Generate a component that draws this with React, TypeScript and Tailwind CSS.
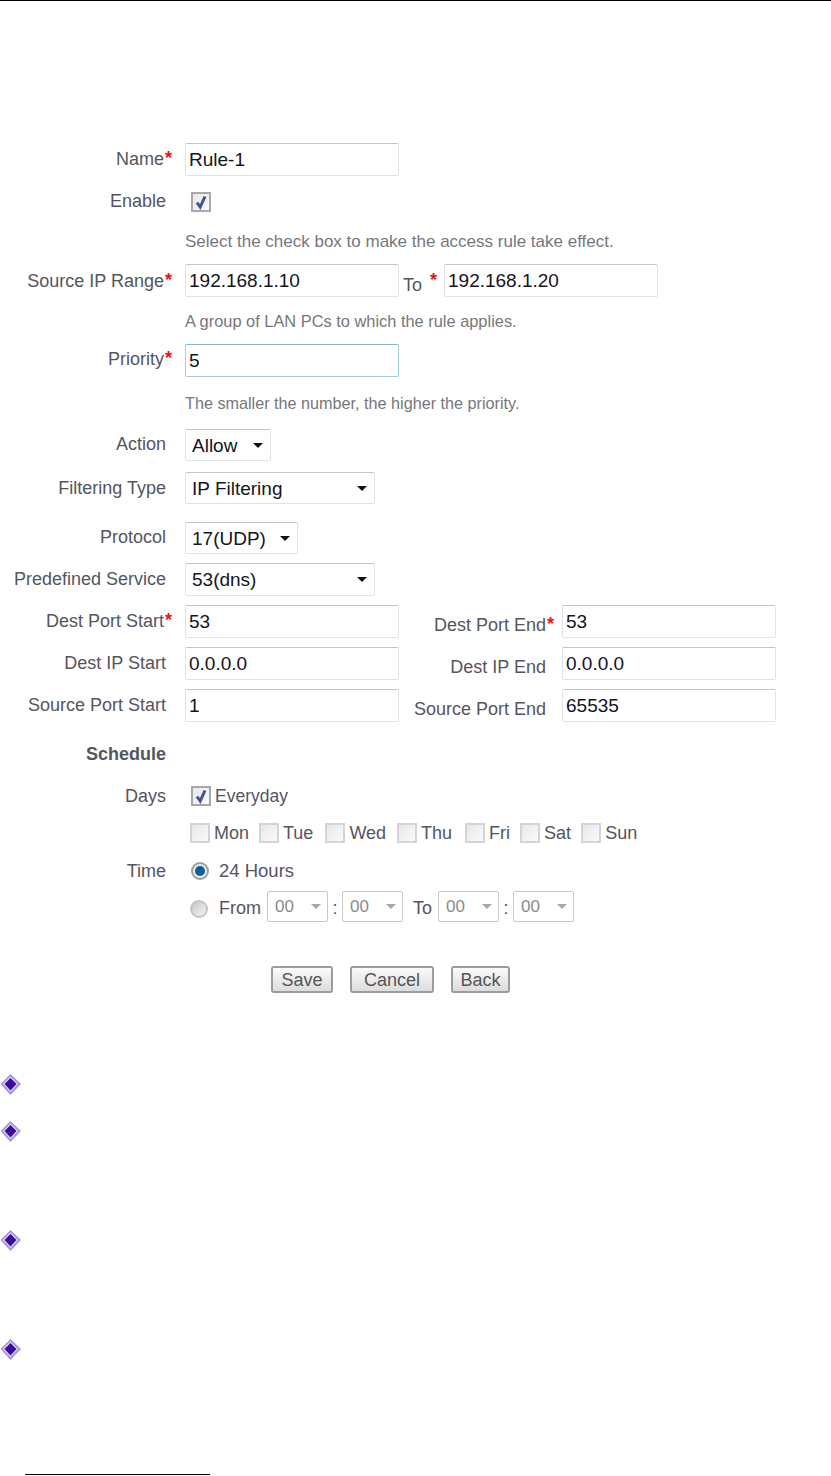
import { ReactNode } from "react";

const Star = () => <span className="font-bold text-[#f01010]">*</span>;

const Label = ({ text, required }: { text: string; required?: boolean }) => (
  <div className="w-[166px] shrink-0 text-right text-[18px] leading-[20px] text-[#555560] whitespace-nowrap relative">
    <span className={required ? "relative -left-[2px]" : ""}>{text}</span>
    {required && <span className="absolute left-full -top-[1px] -ml-[1px]"><Star /></span>}
  </div>
);

const TextBox = ({ value, focused, width = "w-[214px]" }: { value: string; focused?: boolean; width?: string }) => (
  <input
    readOnly
    defaultValue={value}
    className={`${width} h-[33px] shrink-0 rounded-[2px] border px-[3px] text-[19px] text-[#14141e] outline-none ${
      focused
        ? "border-[#a8cbe4] border-t-[#88b4d4]"
        : "border-[#dfe3e8] border-t-[#c2c4c8]"
    }`}
  />
);

const Select = ({ value, width, height = "h-[33px]" }: { value: string; width: string; height?: string }) => (
  <div className={`${width} ${height} flex items-center justify-between rounded-[2px] border border-[#dfe3e8] border-t-[#c2c4c8] pl-[6px] pr-[7px] text-[19px] text-[#14141e]`}>
    <span className="pt-[2px]">{value}</span>
    <span className="h-0 w-0 border-x-[5px] border-t-[5px] border-x-transparent border-t-[#111]" />
  </div>
);

const TimeSelect = () => (
  <div className="flex h-[31px] w-[61px] items-center justify-between rounded-[2px] border border-[#c8c8c8] pl-[7px] pr-[6px] text-[17px] text-[#8a8a8a]">
    <span>00</span>
    <span className="h-0 w-0 border-x-[5px] border-t-[5px] border-x-transparent border-t-[#a8a8a8]" />
  </div>
);

const CheckBox = ({ checked }: { checked?: boolean }) => (
  <div
    className={`flex h-[20px] w-[20px] shrink-0 items-center justify-center border-2 bg-gradient-to-br from-[#e8e8ec] to-[#fafafa] ${
      checked ? "border-[#a8a8ac]" : "border-[#d4d4d4]"
    }`}
  >
    {checked && (
      <svg width="14" height="16" viewBox="0 0 14 16">
        <path d="M3 8.5 L6.2 13 L11 2.5" fill="none" stroke="#41528f" strokeWidth="3" />
      </svg>
    )}
  </div>
);

const Radio = ({ checked, className = "" }: { checked?: boolean; className?: string }) => (
  <div
    className={`flex h-[18px] w-[18px] shrink-0 items-center justify-center rounded-full border-2 ${className} ${
      checked ? "border-[#a0a0a0] bg-[#e8e8e8]" : "border-[#c4c4c4] bg-gradient-to-br from-[#c8c8c8] to-[#f4f4f4]"
    }`}
  >
    {checked && <div className="h-[10px] w-[10px] rounded-full bg-[#0f5f97]" />}
  </div>
);

const Hint = ({ children, className }: { children: ReactNode; className: string }) => (
  <div className={`ml-[185px] leading-[18px] text-[#77777c] whitespace-nowrap ${className}`}>{children}</div>
);

const Button = ({ label, width }: { label: string; width: string }) => (
  <div className={`${width} flex h-[27px] items-center justify-center rounded-[3px] border-2 border-[#9c9c9c] bg-gradient-to-b from-[#fbfbfb] to-[#dcdcdc] pt-[2px] text-[18px] text-[#55555c]`}>
    {label}
  </div>
);

const Day = ({ label, className }: { label: string; className: string }) => (
  <div className={`flex items-center gap-[4px] ${className}`}>
    <CheckBox />
    <span className="text-[18px] leading-[20px] text-[#555560]">{label}</span>
  </div>
);

const Bullet = ({ className }: { className: string }) => (
  <div className={className}>
    <svg width="21" height="21" viewBox="0 0 21 21" className="block">
      <path d="M10.5 0 L21 10 L10.5 21 L0.5 10 Z" fill="#a897d8" />
      <path d="M10.5 2.5 L18 10 L10.5 18 L3 10 Z" fill="#e4dcf4" />
      <path d="M10.5 4 L16.5 10 L10.5 16.5 L4.5 10 Z" fill="#3d0a9e" />
    </svg>
  </div>
);

const PortRow = ({
  left,
  leftValue,
  right,
  rightValue,
  required,
  className,
}: {
  left: string;
  leftValue: string;
  right: string;
  rightValue: string;
  required?: boolean;
  className: string;
}) => (
  <div className={`flex items-start ${className}`}>
    <div className="pt-[6px]">
      <Label text={left} required={required} />
    </div>
    <div className="ml-[19px]">
      <TextBox value={leftValue} />
    </div>
    <div className="relative mt-[10px] w-[147px] shrink-0 whitespace-nowrap text-right text-[18px] leading-[20px] text-[#555560]">
      {right}
      {required && <span className="absolute left-full -top-[1px] ml-[1px]"><Star /></span>}
    </div>
    <div className="ml-[16px]">
      <TextBox value={rightValue} />
    </div>
  </div>
);

const SimpleRow = ({ label, required, className, children, labelTop = "pt-[6px]" }: { label: string; required?: boolean; className: string; children: ReactNode; labelTop?: string }) => (
  <div className={`flex items-start ${className}`}>
    <div className={labelTop}>
      <Label text={label} required={required} />
    </div>
    <div className="ml-[19px] flex items-center">{children}</div>
  </div>
);

export default function App() {
  return (
    <div className="h-[1476px] w-[831px] overflow-hidden bg-white font-['Liberation_Sans',Arial,sans-serif]">
      <div className="h-px w-full bg-black" />

      <SimpleRow label="Name" required className="mt-[142px]">
        <TextBox value="Rule-1" />
      </SimpleRow>
      <SimpleRow label="Enable" className="mt-[14px]" labelTop="pt-[1px]">
        <div className="ml-[6px] mt-[2px]"><CheckBox checked /></div>
      </SimpleRow>
      <Hint className="mt-[21px] text-[17px]">Select the check box to make the access rule take effect.</Hint>

      <div className="mt-[13px] flex items-start">
        <div className="pt-[7px]">
          <Label text="Source IP Range" required />
        </div>
        <div className="ml-[19px]"><TextBox value="192.168.1.10" /></div>
        <div className="ml-[4px] w-[21px] pt-[11px] text-[18px] leading-[20px] text-[#555560]">To</div>
        <div className="ml-[6px] w-[14px] pt-[6px] text-[18px] leading-[20px]"><Star /></div>
        <TextBox value="192.168.1.20" />
      </div>
      <Hint className="mt-[15px] text-[16.4px]">A group of LAN PCs to which the rule applies.</Hint>

      <SimpleRow label="Priority" required className="mt-[14px]" labelTop="pt-[5px]">
        <TextBox value="5" focused />
      </SimpleRow>
      <Hint className="mt-[17px] text-[16.2px]">The smaller the number, the higher the priority.</Hint>

      <SimpleRow label="Action" className="mt-[17px]" labelTop="pt-[5px]">
        <Select value="Allow" width="w-[86px]" height="h-[32px]" />
      </SimpleRow>
      <SimpleRow label="Filtering Type" className="mt-[11px]">
        <Select value="IP Filtering" width="w-[190px]" height="h-[32px]" />
      </SimpleRow>
      <SimpleRow label="Protocol" className="mt-[18px]" labelTop="pt-[5px]">
        <Select value="17(UDP)" width="w-[113px]" height="h-[32px]" />
      </SimpleRow>
      <SimpleRow label="Predefined Service" className="mt-[9px]">
        <Select value="53(dns)" width="w-[190px]" />
      </SimpleRow>

      <PortRow className="mt-[9px]" left="Dest Port Start" leftValue="53" right="Dest Port End" rightValue="53" required />
      <PortRow className="mt-[9px]" left="Dest IP Start" leftValue="0.0.0.0" right="Dest IP End" rightValue="0.0.0.0" />
      <PortRow className="mt-[9px]" left="Source Port Start" leftValue="1" right="Source Port End" rightValue="65535" />

      <div className="mt-[22px] w-[166px] text-right text-[18px] font-bold leading-[20px] text-[#555560]">Schedule</div>

      <SimpleRow label="Days" className="mt-[22px]" labelTop="pt-0">
        <div className="ml-[6px] flex items-center gap-[4px]">
          <CheckBox checked />
          <span className="text-[17.5px] leading-[20px] text-[#555560]">Everyday</span>
        </div>
      </SimpleRow>

      <div className="ml-[190px] mt-[17px] flex">
        <Day label="Mon" className="" />
        <Day label="Tue" className="ml-[10px]" />
        <Day label="Wed" className="ml-[12px]" />
        <Day label="Thu" className="ml-[11px]" />
        <Day label="Fri" className="ml-[13px]" />
        <Day label="Sat" className="ml-[10px]" />
        <Day label="Sun" className="ml-[10px]" />
      </div>

      <SimpleRow label="Time" className="mt-[18px]" labelTop="pt-0">
        <div className="ml-[6px] flex items-center gap-[10px]">
          <Radio checked />
          <span className="text-[18.5px] leading-[20px] text-[#555560]">24 Hours</span>
        </div>
      </SimpleRow>

      <div className="ml-[190px] mt-[10px] flex items-start text-[18px] text-[#555560]">
        <Radio className="mt-[9px]" />
        <span className="ml-[11px] mr-[6px] mt-[4px]">From</span>
        <TimeSelect />
        <span className="mx-[4.5px] mt-[4px]">:</span>
        <TimeSelect />
        <span className="ml-[10px] mr-[6px] mt-[4px]">To</span>
        <TimeSelect />
        <span className="mx-[4.5px] mt-[4px]">:</span>
        <TimeSelect />
      </div>

      <div className="ml-[271px] mt-[44px] flex gap-[17px]">
        <Button label="Save" width="w-[62px]" />
        <Button label="Cancel" width="w-[84px]" />
        <Button label="Back" width="w-[59px]" />
      </div>

      <Bullet className="mt-[81px]" />
      <Bullet className="mt-[26px]" />
      <Bullet className="mt-[88px]" />
      <Bullet className="mt-[88px]" />

      <div className="ml-[25px] mt-[114px] h-px w-[185px] bg-black" />
    </div>
  );
}
